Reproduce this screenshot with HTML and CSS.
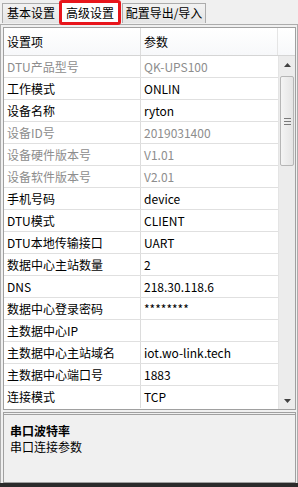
FILE: index.html
```html
<!DOCTYPE html>
<html lang="zh-CN">
<head>
    <meta charset="UTF-8">
    <meta name="viewport" content="width=device-width, initial-scale=1.0">
    <title>高级设置</title>
    <link rel="stylesheet" href="styles.css">
</head>
<body>

    <div class="window">
        <!-- Tabs -->
        <div class="tabs">
            <div class="tab tab-basic">基本设置</div>
            <div class="tab active">高级设置</div>
            <div class="tab tab-export">配置导出/导入</div>
        </div>

        <div class="panel">
            <!-- Property Grid -->
            <div class="grid">
                <div class="grid-head">
                    <div class="cell name">设置项</div>
                    <div class="cell value">参数</div>
                    <div class="cell filler"></div>
                </div>
                <div class="grid-body">
                    <div class="rows">
                        <div class="row readonly"><div class="cell name">DTU产品型号</div><div class="cell value">QK-UPS100</div></div>
                        <div class="row"><div class="cell name">工作模式</div><div class="cell value">ONLIN</div></div>
                        <div class="row"><div class="cell name">设备名称</div><div class="cell value">ryton</div></div>
                        <div class="row readonly"><div class="cell name">设备ID号</div><div class="cell value">2019031400</div></div>
                        <div class="row readonly"><div class="cell name">设备硬件版本号</div><div class="cell value">V1.01</div></div>
                        <div class="row readonly"><div class="cell name">设备软件版本号</div><div class="cell value">V2.01</div></div>
                        <div class="row"><div class="cell name">手机号码</div><div class="cell value">device</div></div>
                        <div class="row"><div class="cell name">DTU模式</div><div class="cell value">CLIENT</div></div>
                        <div class="row"><div class="cell name">DTU本地传输接口</div><div class="cell value">UART</div></div>
                        <div class="row"><div class="cell name">数据中心主站数量</div><div class="cell value">2</div></div>
                        <div class="row"><div class="cell name">DNS</div><div class="cell value">218.30.118.6</div></div>
                        <div class="row"><div class="cell name">数据中心登录密码</div><div class="cell value">********</div></div>
                        <div class="row"><div class="cell name">主数据中心IP</div><div class="cell value"></div></div>
                        <div class="row"><div class="cell name">主数据中心主站域名</div><div class="cell value">iot.wo-link.tech</div></div>
                        <div class="row"><div class="cell name">主数据中心端口号</div><div class="cell value">1883</div></div>
                        <div class="row"><div class="cell name">连接模式</div><div class="cell value">TCP</div></div>
                    </div>

                    <!-- Scrollbar -->
                    <div class="scrollbar">
                        <div class="scroll-btn">
                            <svg width="7" height="4" viewBox="0 0 7 4"><path d="M0 4 L3.5 0 L7 4 Z" fill="#404040"/></svg>
                        </div>
                        <div class="track">
                            <div class="thumb">
                                <span class="grip"></span>
                                <span class="grip"></span>
                                <span class="grip"></span>
                            </div>
                        </div>
                        <div class="scroll-btn">
                            <svg width="7" height="4" viewBox="0 0 7 4"><path d="M0 0 L7 0 L3.5 4 Z" fill="#404040"/></svg>
                        </div>
                    </div>
                </div>
            </div>

            <!-- Description -->
            <div class="help">
                <div class="help-title">串口波特率</div>
                <div class="help-text">串口连接参数</div>
            </div>
        </div>
        <div class="bottom-edge"></div>
    </div>

</body>
</html>
```

FILE: styles.css
```css
/* General Reset */
* {
    margin: 0;
    padding: 0;
    box-sizing: border-box;
}

body {
    width: 298px;
    height: 487px;
    background-color: #f0f0f0;
    font-family: "Noto Sans CJK SC", "Noto Sans", sans-serif;
    font-size: 12px;
    color: #000;
    overflow: hidden;
}

.window {
    display: flex;
    flex-direction: column;
    height: 487px;
}

/* Tabs */
.tabs {
    display: flex;
    align-items: flex-end;
    height: 24px;
    flex-shrink: 0;
    padding-left: 2px;
    position: relative;
    z-index: 1;
}

.tab {
    height: 20px;
    line-height: 18px;
    text-align: center;
    border: 1px solid #acacac;
    border-bottom: none;
    background: linear-gradient(#f2f2f2, #e5e5e5);
    white-space: nowrap;
    margin-bottom: 1px;
}

.tab-basic {
    width: 58px;
}

.tab-export {
    width: 84px;
    margin-left: 1px;
}

.tab.active {
    width: 62px;
    height: 25px;
    line-height: 19px;
    margin: 0 0 -1px -1px;
    background: #fff;
    border: 3px solid #e8151b;
    border-radius: 3px;
}

/* Panel */
.panel {
    height: 459px;
    display: flex;
    flex-direction: column;
    border: 1px solid #acacac;
    border-bottom: none;
    padding: 2px 1px 0 2px;
    background: #f0f0f0;
}

/* Property Grid */
.grid {
    height: 383px;
    flex-shrink: 0;
    overflow: hidden;
    border: 1px solid #a0a0a0;
    background: #fff;
}

.grid-head {
    display: flex;
    height: 28px;
    background: linear-gradient(#ffffff, #f7f8fa);
    border-bottom: 1px solid #d5d5d5;
}

.grid-head .cell {
    line-height: 27px;
    border-right: 1px solid #e5e5e5;
}

.cell {
    padding-left: 3px;
    white-space: nowrap;
    overflow: hidden;
}

.cell.name {
    width: 137px;
    border-right: 1px solid #dcdcdc;
}

.cell.value {
    flex: 1;
    padding-left: 3px;
}

.cell.filler {
    width: 17px;
    border-right: none;
}

.grid-body {
    display: flex;
    height: 353px;
}

.rows {
    flex: 1;
}

.row {
    display: flex;
    height: 22px;
    line-height: 21px;
    border-bottom: 1px solid #e0e0e0;
}

.row:last-child {
    border-bottom: none;
}

.row.readonly {
    color: #8d8d8d;
}

/* Scrollbar */
.scrollbar {
    width: 17px;
    display: flex;
    flex-direction: column;
    background: #ececec;
    border-left: 1px solid #e4e4e4;
}

.scroll-btn {
    height: 17px;
    display: flex;
    align-items: center;
    justify-content: center;
}

.track {
    flex: 1;
    padding: 3px 1px 0 1px;
}

.thumb {
    height: 90px;
    border: 1px solid #b6b6b6;
    border-radius: 2px;
    background: linear-gradient(90deg, #f4f4f4, #e4e4e4);
    display: flex;
    flex-direction: column;
    justify-content: center;
    align-items: center;
    gap: 2px;
}

.grip {
    width: 7px;
    height: 1px;
    background: #7a7a7a;
}

/* Description */
.help {
    height: 71px;
    flex-shrink: 0;
    margin-top: 2px;
    border: 1px solid #a0a0a0;
    border-top: 3px double #a0a0a0;
    padding: 8px 6px;
    line-height: 16px;
}

.help-title {
    font-weight: bold;
}

.bottom-edge {
    height: 4px;
    flex-shrink: 0;
    margin-top: auto;
    background: #2b2b2b;
}
```
